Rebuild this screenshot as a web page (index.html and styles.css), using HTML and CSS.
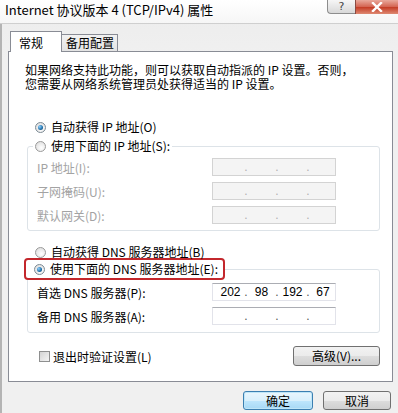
FILE: index.html
```html
<!DOCTYPE html>
<html lang="zh-CN">
<head>
  <meta charset="UTF-8">
  <title>Internet 协议版本 4 (TCP/IPv4) 属性</title>
  <link rel="stylesheet" href="styles.css">
</head>
<body>

<div class="window">
  <div class="titlebar">
    <div class="title">Internet 协议版本 4 (TCP/IPv4) 属性</div>
    <div class="caption-btns">
      <span class="cap help">?</span>
      <span class="cap close">
        <svg width="14" height="10" viewBox="0 0 14 10">
          <path d="M3 1 L11 9 M11 1 L3 9" stroke="#fff" stroke-width="2.4" stroke-linecap="square"/>
        </svg>
      </span>
    </div>
  </div>

  <div class="tabs">
    <div class="tab active">常规</div>
    <div class="tab">备用配置</div>
  </div>

  <div class="panel">
    <p class="desc">如果网络支持此功能，则可以获取自动指派的 IP 设置。否则，<br>您需要从网络系统管理员处获得适当的 IP 设置。</p>

    <div class="option first"><span class="radio on"></span>自动获得 IP 地址(O)</div>

    <fieldset class="group">
      <legend class="option"><span class="radio"></span>使用下面的 IP 地址(S):</legend>
      <div class="rows">
        <div class="row disabled">
          <span class="label">IP 地址(I):</span>
          <span class="ipbox off"><i></i><b>.</b><i></i><b>.</b><i></i><b>.</b><i></i></span>
        </div>
        <div class="row disabled">
          <span class="label">子网掩码(U):</span>
          <span class="ipbox off"><i></i><b>.</b><i></i><b>.</b><i></i><b>.</b><i></i></span>
        </div>
        <div class="row disabled">
          <span class="label">默认网关(D):</span>
          <span class="ipbox off"><i></i><b>.</b><i></i><b>.</b><i></i><b>.</b><i></i></span>
        </div>
      </div>
    </fieldset>

    <div class="option auto-dns"><span class="radio"></span>自动获得 DNS 服务器地址(B)</div>

    <fieldset class="group dns">
      <legend class="option marked"><span class="radio on"></span>使用下面的 DNS 服务器地址(E):</legend>
      <div class="rows">
        <div class="row">
          <span class="label">首选 DNS 服务器(P):</span>
          <span class="ipbox"><i>202</i><b>.</b><i>98</i><b>.</b><i>192</i><b>.</b><i>67</i></span>
        </div>
        <div class="row">
          <span class="label">备用 DNS 服务器(A):</span>
          <span class="ipbox"><i></i><b>.</b><i></i><b>.</b><i></i><b>.</b><i></i></span>
        </div>
      </div>
    </fieldset>

    <div class="bottom-row">
      <label class="check"><span class="checkbox"></span>退出时验证设置(L)</label>
      <button class="btn adv">高级(V)...</button>
    </div>
  </div>

  <div class="footer">
    <button class="btn default">确定</button>
    <button class="btn">取消</button>
  </div>
</div>

</body>
</html>
```

FILE: styles.css
```css
body {
  margin: 0;
  padding: 0;
  font-family: "Noto Sans CJK SC", "Liberation Sans", sans-serif;
  font-size: 12px;
  color: #000;
}

.window {
  width: 398px;
  height: 413px;
  overflow: hidden;
  background: linear-gradient(#ececec, #f0f0f0 60px, #f0f0f0);
  box-shadow: inset 2px 0 0 #b4b4b4;
}

/* title bar */
.titlebar {
  height: 23px;
  display: flex;
  background: linear-gradient(#ffffff, #f6f6f6);
  border-bottom: 1px solid #cfcfcf;
}

.title {
  flex: 1;
  padding-left: 5px;
  font-size: 13px;
  line-height: 20px;
}

.caption-btns {
  display: flex;
  align-self: flex-start;
}

.cap {
  height: 14px;
  display: flex;
  justify-content: center;
  align-items: center;
  box-sizing: border-box;
}

.help {
  width: 28px;
  border: 1px solid #8d8d8d;
  border-top: none;
  border-right: none;
  border-radius: 0 0 0 4px;
  background: linear-gradient(#f6f6f6, #d8d8d8);
  color: #444;
  font-family: "DejaVu Sans", sans-serif;
  font-size: 11px;
  line-height: 12px;
}

.close {
  width: 43px;
  border-left: 1px solid #8a4a42;
  background: linear-gradient(#e9a99c, #d3624f 50%, #c43b24 51%, #de8a73);
}

/* tabs */
.tabs {
  display: flex;
  align-items: flex-end;
  margin: 7px 0 0 10px;
}

.tab {
  box-sizing: border-box;
  border: 1px solid #898c95;
  border-bottom: none;
  height: 17px;
  width: 56px;
  padding-left: 4px;
  line-height: 16px;
  background: linear-gradient(#f2f2f2, #e3e3e3);
}

.tab.active {
  width: 52px;
  height: 21px;
  margin-bottom: -1px;
  padding-left: 8px;
  line-height: 21px;
  background: #fff;
  position: relative;
  z-index: 1;
}

.tab.active + .tab {
  border-left: none;
}

/* panel */
.panel {
  box-sizing: border-box;
  width: 385px;
  margin-left: 8px;
  padding: 11px 0 15px 16px;
  background: #fff;
  border: 1px solid #898c95;
}

.desc {
  margin: 0;
  line-height: 14px;
}

.option {
  display: flex;
  align-items: center;
  gap: 5px;
  height: 16px;
  line-height: 16px;
}

.option.first {
  margin: 28px 0 0 10px;
}

.radio {
  width: 11px;
  height: 11px;
  box-sizing: border-box;
  border-radius: 50%;
  border: 1px solid #9a9a9a;
  background: radial-gradient(circle at 60% 65%, #ffffff, #d8d8d8);
  display: flex;
  justify-content: center;
  align-items: center;
}

.radio.on {
  border-color: #7c8a94;
}

.radio.on::after {
  content: "";
  width: 5px;
  height: 5px;
  border-radius: 50%;
  background: radial-gradient(circle at 35% 35%, #8fd0ff, #1d6ea8 60%, #173c5a);
}

.group {
  box-sizing: border-box;
  width: 353px;
  margin: 3px 0 0 2px;
  padding: 4px 0 6px 9px;
  border: 1px solid #dde3e8;
  border-radius: 3px;
}

.group legend {
  margin-left: -4px;
  padding: 0 2px;
}

.rows {
  display: grid;
  row-gap: 6px;
}

.row {
  display: grid;
  grid-template-columns: 175px 124px;
  align-items: center;
  height: 18px;
}

.row.disabled .label {
  color: #a3a3a3;
}

.ipbox {
  box-sizing: border-box;
  height: 18px;
  display: grid;
  grid-template-columns: 25px 6px 25px 6px 25px 6px 24px;
  padding-left: 5px;
  border: 1px solid #e2e3ea;
  border-top-color: #abadb3;
  background: #fff;
  font-family: "Liberation Sans", sans-serif;
  font-size: 12px;
  line-height: 16px;
}

.ipbox.off {
  border-color: #d3d3d3;
  background: #f4f4f4;
}

.ipbox i {
  font-style: normal;
  text-align: center;
}

.ipbox b {
  font-weight: normal;
  text-align: center;
  color: #555;
}

.ipbox.off b {
  color: #b0b0b0;
}

.option.auto-dns {
  margin: 13px 0 0 10px;
}

.group.dns {
  margin-top: -2px;
  padding: 3px 0 7px 9px;
}

.group legend.marked {
  height: 22px;
  box-sizing: border-box;
  margin-left: -13px;
  padding: 0 5px 0 8px;
  border: 2px solid #c3272c;
  border-radius: 4px;
  line-height: 18px;
}

/* bottom */
.bottom-row {
  display: flex;
  justify-content: space-between;
  align-items: center;
  margin: 13px 12px 0 14px;
}

.check {
  display: flex;
  align-items: center;
  gap: 3px;
}

.checkbox {
  width: 11px;
  height: 11px;
  box-sizing: border-box;
  border: 1px solid #8e8f8f;
  background: linear-gradient(135deg, #d4d4d4, #f4f4f4);
}

.btn {
  font-family: "Noto Sans CJK SC", "Liberation Sans", sans-serif;
  font-size: 12px;
  height: 20px;
  padding: 0;
  border: 1px solid #707070;
  border-radius: 3px;
  background: linear-gradient(#f2f2f2, #ebebeb 50%, #dddddd 51%, #cfcfcf);
  color: #000;
  line-height: 16px;
}

.btn.adv {
  width: 87px;
}

.footer {
  display: flex;
  justify-content: flex-end;
  gap: 10px;
  margin: 9px 7px 0 0;
}

.footer .btn {
  width: 68px;
  height: 19px;
}

.btn.default {
  width: 70px;
  border-color: #3c7fb1;
  box-shadow: inset 0 0 0 1px #bfe6f8;
  background: linear-gradient(#eaf6fd, #d9f0fc 50%, #bee6fd 51%, #a7d9f5);
}
```
